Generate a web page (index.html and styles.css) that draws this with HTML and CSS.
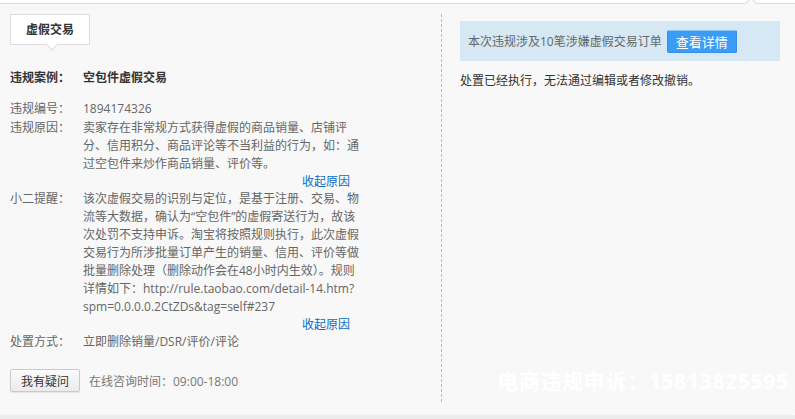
FILE: index.html
```html
<!DOCTYPE html>
<html lang="zh-CN">
<head>
  <meta charset="UTF-8">
  <title>虚假交易 - 违规详情</title>
  <link rel="stylesheet" href="styles.css">
</head>
<body>
  <div class="dialog">
    <span class="top-arrow"></span>
    <div class="case">
      <div class="tab">虚假交易</div>
      <div class="row title">
        <span class="label">违规案例：</span>
        <span class="value">空包件虚假交易</span>
      </div>
      <div class="row first">
        <span class="label">违规编号：</span>
        <span class="value">1894174326</span>
      </div>
      <div class="row">
        <span class="label">违规原因：</span>
        <div class="value">
          卖家存在非常规方式获得虚假的商品销量、店铺评分、信用积分、商品评论等不当利益的行为，如：通过空包件来炒作商品销量、评价等。
          <a class="fold" href="#">收起原因</a>
        </div>
      </div>
      <div class="row">
        <span class="label">小二提醒：</span>
        <div class="value">
          该次虚假交易的识别与定位，是基于注册、交易、物流等大数据，确认为“空包件”的虚假寄送行为，故该次处罚不支持申诉。淘宝将按照规则执行，此次虚假交易行为所涉批量订单产生的销量、信用、评价等做批量删除处理（删除动作会在48小时内生效）。规则详情如下：http://rule.taobao.com/detail-14.htm?<br>spm=0.0.0.0.2CtZDs&amp;tag=self#237
          <a class="fold" href="#">收起原因</a>
        </div>
      </div>
      <div class="row">
        <span class="label">处置方式：</span>
        <span class="value">立即删除销量/DSR/评价/评论</span>
      </div>
      <div class="ask">
        <button class="btn">我有疑问</button>
        <span class="hours">在线咨询时间：09:00-18:00</span>
      </div>
    </div>
    <div class="result">
      <div class="notice">
        <span>本次违规涉及10笔涉嫌虚假交易订单</span>
        <button class="btn-blue">查看详情</button>
      </div>
      <p class="done">处置已经执行，无法通过编辑或者修改撤销。</p>
    </div>
    <div class="watermark">电商违规申诉：15813825595</div>
  </div>
  <div class="bottom"></div>
</body>
</html>
```

FILE: styles.css
```css
body {
  margin: 0;
  padding-top: 3px;
  background: #fff;
  font-family: "Open Sans", "Noto Sans CJK SC", sans-serif;
  font-size: 12px;
  color: #666;
}
.dialog {
  position: relative;
  display: flex;
  height: 388px;
  padding: 10px 0 12px 0;
  border-top: 1px solid #ddd;
  background: #f8f8f8;
}
.top-arrow {
  position: absolute;
  top: -5px;
  left: 747px;
  width: 7px;
  height: 7px;
  background: #f8f8f8;
  border-top: 1px solid #ddd;
  border-left: 1px solid #ddd;
  transform: rotate(45deg);
}
.case {
  width: 431px;
  padding-left: 10px;
}
.tab {
  position: relative;
  width: 78px;
  height: 29px;
  line-height: 29px;
  text-align: center;
  font-weight: bold;
  color: #333;
  background: #fff;
  border: 1px solid #ddd;
}
.tab::after {
  content: "";
  position: absolute;
  left: 37px;
  bottom: -5px;
  width: 7px;
  height: 7px;
  background: #fff;
  border-right: 1px solid #ddd;
  border-bottom: 1px solid #ddd;
  transform: rotate(45deg);
}
.row {
  display: flex;
  line-height: 18px;
  margin-bottom: 1px;
}
.label {
  width: 73px;
  flex-shrink: 0;
}
.value {
  width: 280px;
}
.row.title {
  margin-top: 24px;
  margin-bottom: 13px;
  font-weight: bold;
  color: #333;
}
.fold {
  display: block;
  margin-bottom: -1px;
  padding-right: 13px;
  line-height: 17px;
  text-align: right;
  color: #0a6cc5;
  text-decoration: none;
}
.ask {
  display: flex;
  align-items: center;
  margin-top: 18px;
}
.btn {
  width: 70px;
  height: 23px;
  padding: 0;
  font: inherit;
  color: #333;
  background: linear-gradient(#fbfbfb, #ebebeb);
  border: 1px solid #c9c9c9;
  border-radius: 2px;
  box-shadow: 0 1px 1px rgba(0, 0, 0, 0.08);
}
.hours {
  margin-left: 9px;
  color: #777;
}
.result {
  flex: 1;
  padding: 7px 0 0 18px;
  border-left: 1px dashed #bbb;
}
.notice {
  display: flex;
  align-items: center;
  width: 312px;
  height: 40px;
  padding-left: 8px;
  background: #d5e8f4;
}
.btn-blue {
  width: 70px;
  height: 23px;
  margin-left: 5px;
  padding: 0;
  font: inherit;
  font-size: 13px;
  color: #fff;
  background: #3a9cf4;
  border: 1px solid #3590e4;
  border-top-color: #8cc3f5;
  border-radius: 2px;
}
.done {
  margin: 11px 0 0;
  line-height: 18px;
  color: #333;
}
.watermark {
  position: absolute;
  left: 497px;
  top: 361px;
  font-size: 21px;
  font-weight: bold;
  color: #fff;
  letter-spacing: 0.7px;
}
.bottom {
  height: 5px;
  border-top: 1px dotted #fff;
  background: #ececec;
}
```
